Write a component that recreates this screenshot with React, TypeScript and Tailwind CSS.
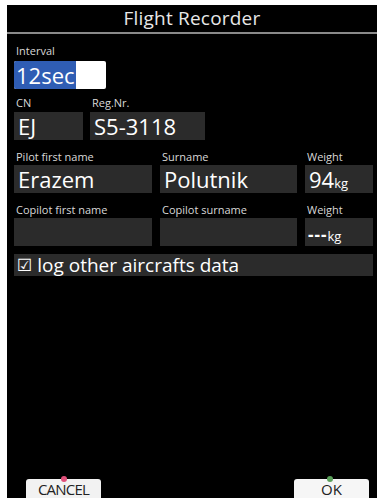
import React from 'react';

const font = { fontFamily: '"Open Sans", "DejaVu Sans", sans-serif' };

function Label({ children, className = '' }: { children: React.ReactNode; className?: string }) {
  return <div className={`text-[11px] leading-[13px] text-[#d8d8d8] pl-[2px] ${className}`}>{children}</div>;
}

function Field({ children, className = '' }: { children?: React.ReactNode; className?: string }) {
  return (
    <div className={`h-[28px] bg-[#2b2b2b] text-white text-[22px] leading-[28px] pl-[4px] whitespace-nowrap overflow-hidden ${className}`}>
      {children}
    </div>
  );
}

export default function App() {
  return (
    <div className="w-[379px] h-[501px] bg-white pt-[5px] pl-[7px] pr-[2px] pb-[3px]" style={font}>
      <div className="h-full bg-black flex flex-col">
        {/* Title */}
        <div className="h-[27px] flex items-center justify-center text-[19px] text-[#e8e8e8] tracking-[0.2px]">
          Flight Recorder
        </div>
        <div className="h-[2px] bg-[#8a8a8a]" />

        <div className="flex flex-col pl-[7px] pr-[4px]">
          <Label className="mt-[10px]">Interval</Label>
          <div className="mt-[4px] w-[92px] h-[28px] flex bg-white rounded-[2px] overflow-hidden">
            <div className="bg-[#2f5db4] text-white text-[22px] leading-[28px] pl-[2px] pr-[1px]">12sec</div>
          </div>

          <div className="mt-[7px] flex gap-[7px]">
            <div className="w-[69px]">
              <Label>CN</Label>
              <Field className="mt-[3px]">EJ</Field>
            </div>
            <div className="w-[115px]">
              <Label>Reg.Nr.</Label>
              <Field className="mt-[3px]">S5-3118</Field>
            </div>
          </div>

          <div className="mt-[10px] flex gap-[8px]">
            <div className="w-[138px]">
              <Label>Pilot first name</Label>
              <Field className="mt-[2px]">Erazem</Field>
            </div>
            <div className="w-[137px]">
              <Label>Surname</Label>
              <Field className="mt-[2px]">Polutnik</Field>
            </div>
            <div className="flex-1">
              <Label>Weight</Label>
              <Field className="mt-[2px]">
                94<span className="text-[13px]">kg</span>
              </Field>
            </div>
          </div>

          <div className="mt-[10px] flex gap-[8px]">
            <div className="w-[138px]">
              <Label>Copilot first name</Label>
              <Field className="mt-[2px]" />
            </div>
            <div className="w-[137px]">
              <Label>Copilot surname</Label>
              <Field className="mt-[2px]" />
            </div>
            <div className="flex-1">
              <Label>Weight</Label>
              <div className="mt-[2px] h-[28px] bg-[#2b2b2b] flex items-end pl-[3px] pb-[3px]">
                <span className="text-[13px] leading-[14px] text-white">
                  <span className="text-[17px] font-bold tracking-[1px]">---</span>kg
                </span>
              </div>
            </div>
          </div>

          <div className="mt-[8px] h-[22px] bg-[#2b2b2b] flex items-center pl-[3px] text-[19px] text-white">
            <span className="text-[17px] mr-[5px]">☑</span>log other aircrafts data
          </div>
        </div>

        <div className="flex-1" />

        {/* Buttons */}
        <div className="flex justify-between pl-[19px] pr-[8px]">
          <div className="relative w-[75px] h-[19px] bg-[#f2f2f2] rounded-t-[3px] flex items-end justify-center text-[15px] leading-[17px] text-[#222] tracking-[-0.8px]">
            <span className="absolute -top-[3px] left-[35px] w-[6px] h-[6px] rounded-full bg-[#e0507a]" />
            CANCEL
          </div>
          <div className="relative w-[75px] h-[19px] bg-[#f6f6f6] rounded-t-[3px] flex items-end justify-center text-[15px] leading-[17px] text-[#222]">
            <span className="absolute -top-[3px] left-[33px] w-[6px] h-[6px] rounded-full bg-[#5aa05a]" />
            OK
          </div>
        </div>
      </div>
    </div>
  );
}
